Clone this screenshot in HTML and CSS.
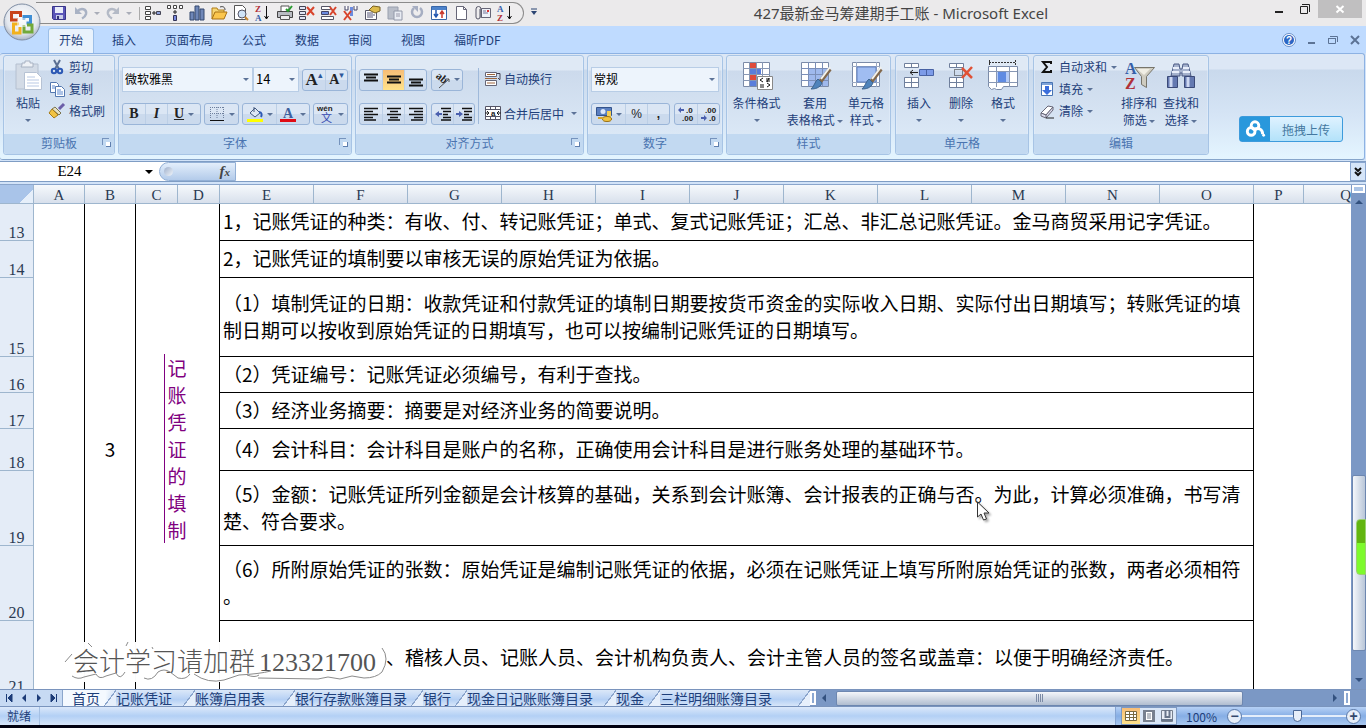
FILE: index.html
```html
<!DOCTYPE html>
<html lang="zh-CN">
<head>
<meta charset="utf-8">
<title>427最新金马筹建期手工账 - Microsoft Excel</title>
<link rel="stylesheet" href="styles.css">
</head>
<body>
<header class="titlebar">
  <button class="office" aria-label="Office">
    <svg width="38" height="38" viewBox="0 0 38 38"><defs><radialGradient id="orb" cx=".5" cy=".4" r=".6"><stop offset="0" stop-color="#fff"/><stop offset=".7" stop-color="#e4e8ef"/><stop offset="1" stop-color="#aab4c4"/></radialGradient></defs><circle cx="19" cy="19" r="18" fill="url(#orb)" stroke="#7f8da3"/><g fill="none" stroke-width="3"><path d="M15 17H8.500V9.500h9V14" stroke="#c8431b"/><path d="M21 17v-3.500h6.500V20H23" stroke="#3f8fd6"/><path d="M16 21H10.500v9h6.500v-6" stroke="#f2b11c"/><path d="M21 22v7h8v-7h-5" stroke="#72a93a"/></g><path d="M15 16h8v7h-8z" fill="none" stroke="#f7f7f7"/></svg>
  </button>
  <div class="qat">
    <button aria-label="保存"><svg viewBox="0 0 16 16"><path d="M1.500 1.500h13v13h-12l-1-1z" fill="#5a55b8" stroke="#38358a"/><path d="M4 2h8v6H4z" fill="#e8ecfa"/><path d="M5 10h7v4H5z" fill="#c8cce8"/><path d="M6 11h2v3H6z" fill="#333377"/></svg></button>
    <button aria-label="撤消"><svg viewBox="0 0 16 16"><path d="M4 7c4-5 10-3 9 2-.5 2-2 3.500-4 4.500" fill="none" stroke="#a9b2c4" stroke-width="2.500"/><path d="M2 2v7h7z" fill="#a9b2c4"/></svg></button><i class="arr dim"></i>
    <button aria-label="恢复"><svg viewBox="0 0 16 16"><path d="M12 7C8 2 2 4 3 9c.5 2 2 3.500 4 4.500" fill="none" stroke="#b4bac6" stroke-width="2.500"/><path d="M14 2v7H7z" fill="#b4bac6"/></svg></button><i class="arr dim"></i>
    <span class="bar"></span>
    <button aria-label="插入行"><svg viewBox="0 0 16 16"><path d="M.5 1.500h5v3h-5zM.5 6.500h5v3h-5zM.5 11.500h5v3h-5z" fill="#fff" stroke="#444"/><path d="M7 8h4M9 6v4" stroke="#222"/><path d="M11.500 6.500h4v3h-4z" fill="#8fa2da" stroke="#445"/></svg></button>
    <button aria-label="插入列"><svg viewBox="0 0 16 16"><path d="M.5.5h3v3h-3zM6.500.5h3v3h-3zM12.500.5h3v3h-3z" fill="#fff" stroke="#444"/><path d="M8 5v4M6 7h4" stroke="#222"/><path d="M6.500 10.500h3v5h-3z" fill="#7788dd" stroke="#335"/></svg></button>
    <button aria-label="图表"><svg viewBox="0 0 16 16"><path d="M1 7h4v8H1zM6 1h4v14H6zM11 4h4v11h-4z" fill="#6f87b8" stroke="#34486f"/></svg></button>
    <button aria-label="打开"><svg viewBox="0 0 16 16"><path d="M1 14V3h5l1 2h6v2" fill="#f7d774" stroke="#b07d18"/><path d="M1 14l3-7h12l-3 7z" fill="#fbc64d" stroke="#a87112"/><path d="M9 2c3-1 5 0 5 3" fill="none" stroke="#444"/></svg></button>
    <button aria-label="打印预览"><svg viewBox="0 0 16 16"><path d="M1.500.5h8l3 3v11h-11z" fill="#fff" stroke="#555"/><circle cx="9" cy="9" r="4" fill="#cfe3f7" stroke="#556"/><path d="M12 12l3 3" stroke="#c58430" stroke-width="2"/></svg></button>
    <button aria-label="降序"><svg viewBox="0 0 16 16"><text x="0" y="7" class="t9 red">Z</text><text x="0" y="16" class="t9 blue">A</text><path d="M11.500 1v13M9.500 11l2 3 2-3" stroke="#111" fill="none"/></svg></button>
    <button aria-label="打印"><svg viewBox="0 0 16 16"><path d="M4 6V1h8v5" fill="#fff" stroke="#555"/><path d="M.5 6.500h15v6H.5z" fill="#b9bcc2" stroke="#444"/><path d="M3.500 10.500h9v4h-9z" fill="#eee" stroke="#555"/><path d="M9 4l2 2 4-5" stroke="#2a9b30" fill="none" stroke-width="2"/></svg></button>
    <button aria-label="删除单元格"><svg viewBox="0 0 16 16"><path d="M.5 1.500h6v3h-6zM.5 6.500h6v3h-6zM.5 11.500h6v3h-6z" fill="#dfe6f5" stroke="#445"/><path d="M8 2l7 8M15 2l-7 8" stroke="#d8452d" stroke-width="2"/></svg></button>
    <button aria-label="删除行"><svg viewBox="0 0 16 16"><path d="M.5 1.500h9v3h-9zM.5 11.500h12v3h-12z" fill="#fff" stroke="#556"/><path d="M.5 6.500h7v3h-7z" fill="#6c8be0" stroke="#446"/><path d="M9 2l6 8M15 2l-6 8" stroke="#d8452d" stroke-width="2"/></svg></button>
    <button aria-label="删除列"><svg viewBox="0 0 16 16"><path d="M2 1v4h3V1M11 1v4h3V1" fill="#fff" stroke="#446"/><path d="M7 2h3v9H7z" fill="#6c8be0"/><path d="M1 6l7 9M8 6l-7 9" stroke="#d8452d" stroke-width="2"/></svg></button>
    <button aria-label="属性"><svg viewBox="0 0 16 16"><path d="M.5 5.500h11v9H.5z" fill="#fff" stroke="#556"/><path d="M2 8h6M2 10h8M2 12h6" stroke="#557"/><path d="M4 5l4-4 7 1v4l-5 2z" fill="#ddbb4c" stroke="#776022"/></svg></button>
    <button aria-label="粘贴"><svg viewBox="0 0 16 16"><path d="M1 2h10v12H1z" fill="#b9bec9" stroke="#999fae"/><path d="M7 6h8v9H7z" fill="#e9ecf3" stroke="#9298a8"/><path d="M9 9h4M9 11h4" stroke="#99a"/></svg></button>
    <button aria-label="重复"><svg viewBox="0 0 16 16"><path d="M11 3a5 5 0 1 1-6 0" fill="none" stroke="#a6aec2" stroke-width="2.500"/><path d="M3 1h6v6z" fill="#a6aec2"/></svg></button>
    <button aria-label="排序"><svg viewBox="0 0 16 16"><path d="M.5 1.500h15v13H.5z" fill="#fff" stroke="#3766a8"/><path d="M1 2h14v3H1z" fill="#4d83cb"/><path d="M5 5v7M3 9l2 3 2-3" stroke="#2458b0" fill="none" stroke-width="1.500"/><path d="M11 13V6M9 9l2-3 2 3" stroke="#c9392b" fill="none" stroke-width="1.500"/></svg></button>
    <button aria-label="新建"><svg viewBox="0 0 16 16"><path d="M3.500 1.500h7l3 3v10h-10z" fill="#fff" stroke="#667"/><path d="M10.500 1.500v3h3" fill="none" stroke="#667"/></svg></button>
    <button aria-label="邮件"><svg viewBox="0 0 16 16"><path d="M6.500 3.500h9v9h-9z" fill="#eef1f8" stroke="#667"/><path d="M8 6h3M8 8h5" stroke="#779"/><path d="M12 5h2v2h-2z" fill="#d33"/><path d="M5 4v8a2 2 0 0 1-4 0V4a2.500 2.500 0 0 1 5 0v9" fill="none" stroke="#556"/></svg></button>
    <button aria-label="升序"><svg viewBox="0 0 16 16"><text x="0" y="7" class="t9 blue">A</text><text x="0" y="16" class="t9 red">Z</text><path d="M12.500 1v13M10.500 11l2 3 2-3" stroke="#111" fill="none"/></svg></button>
  </div>
  <button class="more" aria-label="自定义"><svg width="8" height="8" viewBox="0 0 8 8"><path d="M1 1h6" stroke="#2b4472"/><path d="M1 3h6L4 7z" fill="#2b4472"/></svg></button>
  <h1>427最新金马筹建期手工账 - Microsoft Excel</h1>
  <div class="wincontrols">
    <button aria-label="最小化"><svg viewBox="0 0 12 12"><path d="M2 9h8" stroke="#222" stroke-width="2"/></svg></button>
    <button aria-label="还原"><svg viewBox="0 0 12 12"><path d="M1.500 3.500h7v7h-7zM3 1.500h7.500V9" fill="none" stroke="#222"/></svg></button>
    <button class="close" aria-label="关闭"><svg viewBox="0 0 12 12"><path d="M2.500 3l7 6.500M9.500 3l-7 6.500" stroke="#fff" stroke-width="2"/></svg></button>
  </div>
</header>

<nav class="tabs">
  <button class="on">开始</button><button>插入</button><button>页面布局</button><button>公式</button><button>数据</button><button>审阅</button><button>视图</button><button>福昕PDF</button>
  <div class="docs">
    <button aria-label="帮助"><svg viewBox="0 0 14 14"><circle cx="7" cy="7" r="6.500" fill="#fff" stroke="#6a8fc8"/><circle cx="7" cy="7" r="5" fill="#2c66c4"/><text x="4" y="11" class="q">?</text></svg></button>
    <button aria-label="最小化窗口"><svg viewBox="0 0 14 14"><path d="M4 10h7" stroke="#5c7395" stroke-width="2"/></svg></button>
    <button aria-label="还原窗口"><svg viewBox="0 0 14 14"><path d="M2.500 5.500h7v5h-7zM4 3.500h7.500V9M2 5.500h8" fill="none" stroke="#5c7395"/></svg></button>
    <button aria-label="关闭窗口"><svg viewBox="0 0 14 14"><path d="M3 3l8 8M11 3l-8 8" stroke="#5c7395" stroke-width="2"/></svg></button>
  </div>
</nav>

<section class="ribbon">
  <div class="group g-clip">
    <div class="content">
      <button class="big paste"><svg viewBox="0 0 32 32"><path d="M4 4h22v25H4z" fill="#d3dbe6" stroke="#b5c0d0"/><path d="M10 5V3h3V1h5v2h3v4H9z" fill="#eef1f6" stroke="#a8b2c2"/><path d="M12.500 12.500h12l5 5v12h-17z" fill="#fff" stroke="#b6c2d4"/><path d="M15 17h8M15 20h12M15 23h12M15 26h12" stroke="#b9c9e4"/></svg><span>粘贴</span><i class="arr"></i></button>
      <div class="stack">
        <button><svg viewBox="0 0 16 16"><path d="M5 1l5 9M11 1L6 10" stroke="#5b6f92" stroke-width="2"/><circle cx="5" cy="12" r="2.200" fill="none" stroke="#2c58b4" stroke-width="2"/><circle cx="11" cy="12" r="2.200" fill="none" stroke="#2c58b4" stroke-width="2"/></svg>剪切</button>
        <button><svg viewBox="0 0 16 16"><path d="M1.500 1.500h6l2 2v8h-8z" fill="#fff" stroke="#5478b0"/><path d="M6.500 5.500h6l3 3v7h-9z" fill="#fff" stroke="#5478b0"/><path d="M3 5h3M3 7h3M8 9h4M8 11h6M8 13h6" stroke="#5b87cf"/></svg>复制</button>
        <button><svg viewBox="0 0 16 16"><path d="M15 1l-5 5" stroke="#6b5ea8" stroke-width="3"/><path d="M6 4l6 6-2 2-7-6z" fill="#e6e0c0" stroke="#7b7450"/><path d="M3 6l6 6-4 3-5-5z" fill="#f1c343" stroke="#a67c18"/></svg>格式刷</button>
      </div>
    </div>
    <footer>剪贴板<i class="launch"></i></footer>
  </div>

  <div class="group g-font">
    <div class="content rows">
      <div class="row">
        <label class="combo w-font"><select aria-label="字体"><option>微软雅黑</option></select><i class="arr"></i></label>
        <label class="combo w-size"><select aria-label="字号"><option>14</option></select><i class="arr"></i></label>
        <div class="set push"><button class="w22 serif l">A<sup>▴</sup></button><button class="w22 serif">A<sup>▾</sup></button></div>
      </div>
      <div class="row">
        <div class="set"><button class="w22 serif">B</button><button class="w22 serif it">I</button><button class="w34 serif"><u>U</u><i class="arr"></i></button></div>
        <div class="set push"><button class="w34"><svg viewBox="0 0 16 16"><path d="M1.500 1v12M8 1v12M14.500 1v12M1 1.500h14M1 7.500h14" stroke="#6d7f9d" stroke-dasharray="1 1"/><path d="M1 14.500h14" stroke="#111"/></svg><i class="arr"></i></button></div>
        <div class="set"><button class="w34"><svg viewBox="0 0 16 16"><path d="M3 7l5-5 5 5-5 4z" fill="#dce6f4" stroke="#445a80"/><path d="M7 1v5" stroke="#445a80"/><path d="M12 6c3 0 3 3 2 5" fill="none" stroke="#2c58b4" stroke-width="2"/><path d="M0 13h16v3H0z" fill="#ff0"/></svg><i class="arr"></i></button><button class="w34"><svg viewBox="0 0 16 16"><text x="3" y="12" class="fa">A</text><path d="M0 13h16v3H0z" fill="#e00b14"/></svg><i class="arr"></i></button></div>
        <div class="set"><button class="w34"><svg viewBox="0 0 16 16"><text x="-1" y="5" class="wen">wén</text><text x="3" y="16" class="wz">文</text></svg><i class="arr"></i></button></div>
      </div>
    </div>
    <footer>字体<i class="launch"></i></footer>
  </div>

  <div class="group g-align">
    <div class="content">
      <div class="rows">
        <div class="row">
          <div class="set"><button class="w22"><svg viewBox="0 0 16 16"><path d="M1 2.500h14M3 5.500h10M1 8.500h14" stroke="#111" stroke-width="2"/></svg></button><button class="w22 hot"><svg viewBox="0 0 16 16"><path d="M1 4.500h14M3 7.500h10M1 10.500h14" stroke="#111" stroke-width="2"/></svg></button><button class="w22"><svg viewBox="0 0 16 16"><path d="M1 7.500h14M3 10.500h10M1 13.500h14" stroke="#111" stroke-width="2"/></svg></button></div>
          <div class="set"><button class="w30"><svg viewBox="0 0 16 16"><text x="1" y="10" class="ab" transform="rotate(40 8 8)">ab</text><path d="M5 16L15 7M12 7h3v3" fill="none" stroke="#555"/></svg><i class="arr"></i></button></div>
        </div>
        <div class="row">
          <div class="set"><button class="w22"><svg viewBox="0 0 16 16"><path d="M1 2.500h14M1 5.500h9M1 8.500h14M1 11.500h9M1 14h12" stroke="#111" stroke-width="1.500"/></svg></button><button class="w22"><svg viewBox="0 0 16 16"><path d="M1 2.500h14M4 5.500h8M1 8.500h14M4 11.500h8M2 14h12" stroke="#111" stroke-width="1.500"/></svg></button><button class="w22"><svg viewBox="0 0 16 16"><path d="M1 2.500h14M6 5.500h9M1 8.500h14M6 11.500h9M3 14h12" stroke="#111" stroke-width="1.500"/></svg></button></div>
          <div class="set"><button class="w21"><svg viewBox="0 0 16 16"><path d="M6 2.500h10M8 5.500h8M8 8.500h5M8 11.500h8M6 14h10" stroke="#111" stroke-width="1.500"/><path d="M0 8l4-3v2h3v2H4v2z" fill="#4a5fae"/></svg></button><button class="w21"><svg viewBox="0 0 16 16"><path d="M6 2.500h10M8 5.500h8M8 8.500h5M8 11.500h8M6 14h10" stroke="#111" stroke-width="1.500"/><path d="M7 8L3 5v2H0v2h3v2z" fill="#4a5fae"/></svg></button></div>
        </div>
      </div>
      <span class="vbar"></span>
      <div class="rows">
        <div class="row"><button class="flat"><svg viewBox="0 0 16 16"><path d="M.5 1.500h11v4H.5zM.5 9.500h11v5H.5z" fill="#fff" stroke="#667"/><path d="M2 3.500h8M2 12h8M0 7.500h12" stroke="#a0673d"/><path d="M12 2.500h3v6M13 7l2 2" fill="none" stroke="#445"/></svg>自动换行</button></div>
        <div class="row"><button class="flat"><svg viewBox="0 0 16 16"><path d="M.5 1.500h15v13H.5zM5.500 1v3M10.500 1v3M5.500 12v3M10.500 12v3M.5 4.500h15M.5 11.500h15" fill="#fff" stroke="#556"/><path d="M0 8h4M16 8h-4M2 6l2 2-2 2M14 6l-2 2 2 2" fill="none" stroke="#222"/><text x="6" y="11" class="a8">a</text></svg>合并后居中<i class="arr"></i></button></div>
      </div>
    </div>
    <footer>对齐方式<i class="launch"></i></footer>
  </div>

  <div class="group g-num">
    <div class="content rows">
      <div class="row"><label class="combo w-num"><select aria-label="数字格式"><option>常规</option></select><i class="arr"></i></label></div>
      <div class="row">
        <div class="set"><button class="w34"><svg viewBox="0 0 16 16"><path d="M.5 1.500h15v8H.5z" fill="#5b7fc0" stroke="#34548c"/><circle cx="7" cy="5.500" r="2.500" fill="#dce8fa"/><path d="M11 5h4v7h-4z" fill="#f4cd55"/><ellipse cx="11" cy="13" rx="4.500" ry="2.500" fill="#f1c340" stroke="#9a7114"/><path d="M2 12h5" stroke="#d5a52c" stroke-width="2"/></svg><i class="arr"></i></button><button class="w22 sans">%</button><button class="w22 sans comma">,</button></div>
        <div class="set"><button class="w22"><svg viewBox="0 0 16 16"><text x="8" y="7" class="dec">.0</text><text x="4" y="15" class="dec">.00</text><path d="M0 4l3-3v2h3v2H3v2z" fill="#4a5fae"/></svg></button><button class="w22"><svg viewBox="0 0 16 16"><text x="4" y="7" class="dec">.00</text><text x="8" y="15" class="dec">.0</text><path d="M6 12L3 9v2H0v2h3v2z" fill="#4a5fae"/></svg></button></div>
      </div>
    </div>
    <footer>数字<i class="launch"></i></footer>
  </div>

  <div class="group g-style">
    <div class="content">
      <button class="big w60"><svg viewBox="0 0 32 32"><path d="M2.500 2.500h26v24h-26z" fill="#fff" stroke="#7b8ba8"/><path d="M9 3h6v5H9zM9 15h6v5H9z" fill="#df4b3c"/><path d="M9 9h11v5H9zM9 21h6v5H9z" fill="#5b7edb"/><path d="M2 8.500h27M2 14.500h27M2 20.500h27M8.500 2v25M15.500 2v25M21.500 2v25" stroke="#8797b4"/><path d="M16.500 16.500h15v13h-15z" fill="#fff" stroke="#888"/><path d="M22 18l-3 2 3 2M19 25h4M19 27h4M25 19h4M25 21h4M28 18l-2 4M26 23l3 2-3 2" fill="none" stroke="#111"/></svg><span>条件格式</span><i class="arr"></i></button>
      <button class="big w58"><svg viewBox="0 0 32 32"><path d="M2.500 2.500h27v24h-27z" fill="#fff" stroke="#7b8ba8"/><path d="M9 9h20v17H9z" fill="#9fb9ed"/><path d="M2 8.500h28M2 14.500h28M2 20.500h28M9.500 2v25M16.500 2v25M23.500 2v25" stroke="#7b8fb8"/><path d="M31 9L21 22" stroke="#82684c" stroke-width="4"/><path d="M31 7l-9 12" stroke="#f2f2ee" stroke-width="2"/><path d="M19 19l4 4c-2 5-7 6-11 6 3-2 4-8 7-10z" fill="#4f83bb" stroke="#3e6590"/></svg><span>套用<br>表格格式 <i class="arr"></i></span></button>
      <button class="big w44"><svg viewBox="0 0 32 32"><path d="M2.500 2.500h27v24h-27z" fill="#fff" stroke="#7b8ba8"/><path d="M2 6.500h28M2 22.500h28M6.500 2v25M26.500 2v25" stroke="#9aa8c2"/><path d="M7 7h19v15H7z" fill="#a0bdf2" stroke="#6180bf"/><path d="M31 9L21 22" stroke="#82684c" stroke-width="4"/><path d="M31 7l-9 12" stroke="#f2f2ee" stroke-width="2"/><path d="M19 19l4 4c-2 5-7 6-11 6 3-2 4-8 7-10z" fill="#4f83bb" stroke="#3e6590"/></svg><span>单元格<br>样式 <i class="arr"></i></span></button>
    </div>
    <footer>样式</footer>
  </div>

  <div class="group g-cells">
    <div class="content">
      <button class="big w42"><svg viewBox="0 0 32 32"><path d="M1.500 3.500h14v4h-14zM1.500 17.500h14v10h-14zM8.500 3v5M8.500 17v10M1 22.500h15" fill="#fff" stroke="#6f7f9c"/><path d="M16.500 9.500h14v6h-14zM23.500 9v7" fill="#7c9be8" stroke="#4862a4"/><path d="M15 12.500H7M10 10l-3 2.500 3 2.500" fill="none" stroke="#222"/></svg><span>插入</span><i class="arr"></i></button>
      <button class="big w42"><svg viewBox="0 0 32 32"><path d="M4.500 3.500h14v4h-14zM4.500 17.500h14v10h-14zM11.500 3v5M11.500 17v10M4 22.500h15" fill="#fff" stroke="#6f7f9c"/><path d="M9.500 9.500h8v6h-8z" fill="none" stroke="#222" stroke-dasharray="1 1"/><path d="M17 8l10 10M27 7L17 18" stroke="#e05236" stroke-width="2.500"/></svg><span>删除</span><i class="arr"></i></button>
      <button class="big w42"><svg viewBox="0 0 32 32"><path d="M2 2.500h27M2.500 0v5M28.500 0v5" stroke="#333" stroke-dasharray="2 1"/><path d="M1.500 6.500h29v20h-14l-2 3h-5l-2-1-3 1-3-3z" fill="#fff" stroke="#7b8ba8"/><path d="M1 11.500h29M1 22.500h29M9.500 6v21M22.500 6v21" stroke="#8797b4"/><path d="M10 12h12v10H10z" fill="#b5cbf6"/><path d="M11 12h8v10h-8z" fill="#5f8be2"/></svg><span>格式</span><i class="arr"></i></button>
    </div>
    <footer>单元格</footer>
  </div>

  <div class="group g-edit">
    <div class="content">
      <div class="stack">
        <button><svg viewBox="0 0 16 16"><path d="M12 5V3H4l4 5-4 5h8v-2" fill="none" stroke="#111" stroke-width="2"/></svg>自动求和<i class="arr"></i></button>
        <button><svg viewBox="0 0 16 16"><path d="M2.500 1.500h11v13h-11z" fill="#fff" stroke="#4673b3"/><path d="M3 2h10v2H3z" fill="#7fa3d8"/><path d="M6 5h4v4h3l-5 5-5-5h3z" fill="#3a6ddb"/></svg>填充<i class="arr"></i></button>
        <button><svg viewBox="0 0 16 16"><path d="M2 10l7-7 5 1-7 8z" fill="#fff" stroke="#667"/><path d="M2 10l5 2v3l-5-2zM7 12l7-8v3l-7 8" fill="#dde" stroke="#667"/><path d="M7 15h8" stroke="#222"/></svg>清除<i class="arr"></i></button>
      </div>
      <button class="big w42"><svg viewBox="0 0 32 32"><path d="M11.500 7.500h20l-8 9v11l-5-3v-8z" fill="#cfccc0" stroke="#77756b"/><path d="M14 9h13l-6 6z" fill="#f0eee4"/><text x="2" y="14" class="az blue">A</text><text x="2" y="29" class="az red">Z</text></svg><span>排序和<br>筛选 <i class="arr"></i></span></button>
      <button class="big w42"><svg viewBox="0 0 32 32"><path d="M9 4h5l1 5h2l1-5h5l3 12h-9v-3h-2v3H6z" fill="#a5b2cd" stroke="#4c5b85"/><path d="M8 8h6M7 12h7M18 8h6M18 12h7" stroke="#e8eefa" stroke-width="2"/><path d="M2.500 16.500h10v11h-10zM19.500 16.500h10v11h-10z" fill="#6479b1" stroke="#3b4a78"/><path d="M6 17v10M23 17v10" stroke="#cdd8f2" stroke-width="3"/></svg><span>查找和<br>选择 <i class="arr"></i></span></button>
    </div>
    <footer>编辑</footer>
  </div>
  <button class="upload"><svg viewBox="0 0 30 25"><g fill="none" stroke="#fff" stroke-width="3"><circle cx="15" cy="9" r="4"/><circle cx="11" cy="15" r="4"/><path d="M14 13c4-2 9-1 9 5"/></g><circle cx="24" cy="19" r="1.500" fill="#fff"/></svg><span>拖拽上传</span></button>
</section>

<div class="formula">
  <input class="name" aria-label="名称框" value="E24"><i class="arr black"></i>
  <button class="fx"><i class="knob"></i><em>f<small>x</small></em></button>
  <input class="entry" aria-label="编辑栏">
  <button class="expand" aria-label="展开"><svg viewBox="0 0 12 12"><path d="M3 2l3 3 3-3M3 6l3 3 3-3" fill="none" stroke="#111" stroke-width="2"/></svg></button>
</div>

<main class="work">
  <div class="gridwrap">
    <table class="grid">
      <colgroup><col class="c-h"><col class="c-a"><col class="c-a"><col class="c-c"><col class="c-c"><col class="c-e"><col class="c-e"><col class="c-e"><col class="c-e"><col class="c-e"><col class="c-e"><col class="c-e"><col class="c-e"><col class="c-e"><col class="c-e"><col class="c-e"><col class="c-p"><col class="c-q"></colgroup>
      <thead><tr><th class="corner"></th><th>A</th><th>B</th><th>C</th><th>D</th><th>E</th><th>F</th><th>G</th><th>H</th><th>I</th><th>J</th><th>K</th><th>L</th><th>M</th><th>N</th><th>O</th><th>P</th><th class="last">Q</th></tr></thead>
      <tbody>
        <tr class="h37"><th>13</th><td class="rb" rowspan="9"></td><td class="rb mid" rowspan="9">3</td><td class="rb mid side" rowspan="9" colspan="2"><div class="vert">记账凭证的填制</div></td><td class="txt" colspan="11">1，记账凭证的种类：有收、付、转记账凭证；单式、复式记账凭证；汇总、非汇总记账凭证。金马商贸采用记字凭证。</td><td rowspan="9" colspan="2"></td></tr>
        <tr class="h37"><th>14</th><td class="txt" colspan="11">2，记账凭证的填制要以审核无误的原始凭证为依据。</td></tr>
        <tr class="h79"><th>15</th><td class="txt" colspan="11">（1）填制凭证的日期：收款凭证和付款凭证的填制日期要按货币资金的实际收入日期、实际付出日期填写；转账凭证的填<br>制日期可以按收到原始凭证的日期填写，也可以按编制记账凭证的日期填写。</td></tr>
        <tr class="h36"><th>16</th><td class="txt" colspan="11">（2）凭证编号：记账凭证必须编号，有利于查找。</td></tr>
        <tr class="h36"><th>17</th><td class="txt" colspan="11">（3）经济业务摘要：摘要是对经济业务的简要说明。</td></tr>
        <tr class="h42"><th>18</th><td class="txt" colspan="11">（4）会计科目：会计科目是账户的名称，正确使用会计科目是进行账务处理的基础环节。</td></tr>
        <tr class="h75"><th>19</th><td class="txt" colspan="11">（5）金额：记账凭证所列金额是会计核算的基础，关系到会计账簿、会计报表的正确与否。为此，计算必须准确，书写清<br>楚、符合要求。</td></tr>
        <tr class="h75"><th>20</th><td class="txt" colspan="11">（6）所附原始凭证的张数：原始凭证是编制记账凭证的依据，必须在记账凭证上填写所附原始凭证的张数，两者必须相符<br>。</td></tr>
        <tr class="h74"><th>21</th><td class="txt tail" colspan="11">、稽核人员、记账人员、会计机构负责人、会计主管人员的签名或盖章：以便于明确经济责任。</td></tr>
      </tbody>
    </table>
    <div class="banner"><span>会计学习请加群<b>123321700</b></span>
      <svg viewBox="0 0 330 44"><path d="M1 20l7-8M8 34q6 4 12 1l12-3q3 6 10 2l10-3q4 8 9-1M80 36q8 4 14-6 6-4 12 0l8 6q8 2 12-4M130 32q14 10 30 6l15-5q20-1 32-4M183 33q8 3 12 0M194 36l60 1 10-2 12 2 12-3 12 2q12 0 18-6 8-14 0-24M24 1l4 4M62 4l2-4M88 5l1 2" fill="none" stroke="#8b8b8b"/></svg>
    </div>
    <svg class="cursor" viewBox="0 0 14 20"><path d="M1.500 1v15l3.500-3 2.500 6 3-1-2.500-6h5z" fill="#fff" stroke="#333"/></svg>
  </div>
  <div class="vscroll"><span class="split"></span><i class="arr up"></i><span class="thumb"></span><i class="arr"></i></div>
  <span class="meter"></span>
</main>

<div class="sheets">
  <div class="nav">
    <button aria-label="第一张"><svg viewBox="0 0 8 8"><path d="M1.500 0v8M7 0L3 4l4 4z" fill="#1d3c78" stroke="#1d3c78"/></svg></button><button aria-label="上一张"><svg viewBox="0 0 8 8"><path d="M6 0L2 4l4 4z" fill="#1d3c78"/></svg></button><button aria-label="下一张"><svg viewBox="0 0 8 8"><path d="M2 0l4 4-4 4z" fill="#1d3c78"/></svg></button><button aria-label="最后一张"><svg viewBox="0 0 8 8"><path d="M6.500 0v8M1 0l4 4-4 4z" fill="#1d3c78" stroke="#1d3c78"/></svg></button>
  </div>
  <div class="list"><button class="first">首页</button><button>记账凭证</button><button>账簿启用表</button><button>银行存款账簿目录</button><button>银行</button><button>现金日记账账簿目录</button><button>现金</button><button>三栏明细账簿目录</button></div>
  <div class="hscroll"><span class="grip"></span><i class="arr left"></i><span class="hthumb"><i></i></span><i class="arr right"></i><span class="grip"></span></div>
</div>

<footer class="status">
  <span class="ready">就绪</span>
  <div class="zoombar">
    <div class="views"><button class="hot" aria-label="普通"><svg viewBox="0 0 14 12"><path d="M1.500 1.500h11v9h-11zM1 4.500h12M1 7.500h12M5.500 1v10M9.500 1v10" fill="#fff" stroke="#7a6a40"/></svg></button><button aria-label="页面布局"><svg viewBox="0 0 14 12"><path d="M1 0h12v12H1z" fill="#77808f"/><path d="M4 2h6v8H4z" fill="#fff"/><path d="M5 4h4M5 6h4M5 8h4" stroke="#77808f"/></svg></button><button aria-label="分页预览"><svg viewBox="0 0 14 12"><path d="M1.500.5h11v11h-11z" fill="#e8edf5" stroke="#77808f"/><path d="M5.500 0v7h4V0M1 10h12" fill="none" stroke="#68758a" stroke-width="2"/></svg></button></div>
    <span class="pct">100%</span>
    <button class="round" aria-label="缩小">−</button>
    <input type="range" min="0" max="100" value="54" aria-label="显示比例">
    <button class="round" aria-label="放大">+</button>
  </div>
</footer>
</body>
</html>
```

FILE: styles.css
```css
* { box-sizing: border-box; }
html, body { height: 100%; margin: 0; }
body {
  display: flex; flex-direction: column; overflow: hidden;
  font: 12px/17px "Noto Sans CJK SC", sans-serif; color: #1e3f7a;
  background: #d2e3f8; border-bottom: 3px solid #00000f;
}
button { font: inherit; color: inherit; border: 0; background: none; padding: 0; margin: 0; display: flex; align-items: center; justify-content: center; white-space: nowrap; }
svg { display: block; flex: none; overflow: visible; }
.arr { display: inline-block; flex: none; width: 0; height: 0; border: 3px solid transparent; border-top-color: #5c7398; border-bottom-width: 0; vertical-align: middle; }
.arr.dim { border-top-color: #a9adb8; }
.arr.black { border-width: 4px 4px 0; border-top-color: #000; }
.arr.up { border-width: 0 4px 4px; border-bottom-color: #33517f; }
.arr.left { border-width: 4px 4px 4px 0; border-color: transparent #33517f; }
.arr.right { border-width: 4px 0 4px 4px; border-color: transparent #33517f; }
.red { fill: #b03038; }
.blue { fill: #3560a8; }

/* title bar */
.titlebar { position: relative; z-index: 2; flex: none; display: flex; align-items: flex-start; height: 26px; background: #ebeaeb; }
.office { position: absolute; left: 3px; top: 3px; }
.qat { display: flex; align-items: center; gap: 6px; margin-top: 2px; height: 22px; margin-left: 36px; padding: 0 10px 0 15px; border: 1px solid #8b8b8b; border-left: 0; border-radius: 0 11px 11px 0; background: #eeedee; }
.qat svg { width: 16px; height: 16px; }
.qat .arr { margin: 0 -1px; }
.qat .bar { width: 1px; height: 13px; background: #aaa; margin: 0 -1px 0 2px; }
.t9 { font: bold 9px "Liberation Serif", serif; }
.more { width: 20px; height: 24px; }
h1 { flex: 1; margin: 0; padding-right: 8px; text-align: center; font: 15px/26px "Noto Sans", "Noto Sans CJK SC", sans-serif; color: #444; white-space: nowrap; }
.wincontrols { display: flex; margin-right: 4px; }
.wincontrols button { width: 26px; height: 18px; }
.wincontrols svg { width: 12px; height: 12px; }
.wincontrols .close { width: 44px; background: #c0bfc0; }

/* ribbon tabs */
.tabs { flex: none; display: flex; align-items: flex-end; gap: 7px; height: 27px; padding-left: 48px; background: #bfdbff; }
.tabs > button { height: 25px; padding: 0 11px 3px; border-radius: 3px 3px 0 0; }
.tabs > .on { background: #e9f2fc; border: 1px solid #9cbfe8; border-bottom: 0; padding: 0 10px 4px; }
.docs { display: flex; align-items: center; gap: 8px; margin-left: auto; padding-right: 4px; height: 27px; }
.docs svg { width: 14px; height: 14px; }
.q { font: bold 10px "Liberation Sans", sans-serif; fill: #fff; }

/* ribbon */
.ribbon { flex: none; display: flex; gap: 3px; height: 107px; padding: 1px 3px 4px; margin-right: 1px; border: 1px solid #8db2e3; border-left: 0; border-radius: 3px; background: linear-gradient(#dce7f5 0 15px, #c9d9ec 16px, #d5e4f5 60px, #e4f5ff 100%); border-bottom-color: #86a5cb; }
.group { flex: none; display: flex; flex-direction: column; border: 1px solid #a7c4e5; border-radius: 3px; box-shadow: inset 0 0 0 1px #e6f0fb80; background: linear-gradient(#dfe9f5 0 14px, #ccdaec 15px, #dbe8f6 80px); }
.content { flex: 1; display: flex; padding: 4px 3px 0; }
.group footer { position: relative; height: 20px; line-height: 18px; text-align: center; color: #4a74b0; background: #c2d9f1; border-radius: 0 0 3px 3px; }
.launch { position: absolute; right: 5px; top: 4px; width: 7px; height: 7px; border: solid #7593bd; border-width: 1px 0 0 1px; }
.launch::after { content: ""; position: absolute; left: 3px; top: 3px; width: 4px; height: 4px; border: solid #5f7fae; border-width: 0 1px 1px 0; background: #fff; }
.g-clip { width: 112px; }
.g-font { width: 234px; }
.g-align { width: 229px; }
.g-num { width: 136px; }
.g-style { width: 165px; margin-right: 1px; }
.g-cells { width: 134px; margin-right: 1px; }
.g-edit { width: 176px; }
.big { flex-direction: column; justify-content: flex-start; line-height: 17px; }
.big svg { width: 32px; height: 32px; margin-bottom: 2px; }
.big > .arr { margin-top: 8px; }
.w60 { width: 53px; }
.w58 { width: 64px; }
.w44 { width: 38px; }
.w42 { width: 42px; }
.paste { width: 42px; }
.g-cells .content { padding-left: 2px; }
.stack { display: flex; flex-direction: column; gap: 6px; }
.stack button { height: 16px; line-height: 14px; padding-bottom: 2px; gap: 4px; justify-content: flex-start; }
.stack svg { width: 16px; height: 16px; }
.g-edit .content { padding-left: 5px; }
.g-edit .stack { width: 79px; }
.rows { display: flex; flex-direction: column; gap: 11px; padding-top: 11px; }
.content > .rows { padding-top: 7px; }
.row { display: flex; align-items: center; gap: 3px; height: 25px; }
.row + .row { height: 22px; }
.g-align .row, .g-num .row { gap: 4px; }
.set { display: flex; height: 22px; border: 1px solid #9ab5d8; border-radius: 3px; background: linear-gradient(#dbe6f4 50%, #cbdaed 50%); }
.set button + button { border-left: 1px solid #bccfe6; }
.set svg { width: 16px; height: 16px; }
.set button { gap: 4px; color: #222; }
.w22 { width: 22px; }
.w21 { width: 21px; }
.w30 { width: 30px; }
.w34 { width: 33px; }
.serif { font: bold 14px "Liberation Serif", serif; }
.serif.l { font-size: 17px; }
.serif sup { font: 9px "DejaVu Sans", sans-serif; color: #2b579a; align-self: flex-start; margin-left: -4px; }
.it { font-style: italic; }
.sans { font: 12px "Liberation Sans", sans-serif; }
.comma { font-weight: bold; }
.hot { background: linear-gradient(#f7bd77, #ffe28a); }
.fa { font: bold 14px "Liberation Serif", serif; fill: #3e5f9d; }
.wen { font: bold 8px "Liberation Sans", sans-serif; fill: #222; }
.wz { font: 11px "Noto Sans CJK SC", sans-serif; fill: #3548b0; }
.ab { font: bold 11px "Liberation Serif", serif; fill: #222; }
.a8 { font: bold 8px "Liberation Sans", sans-serif; fill: #222; }
.dec { font: bold 8px "Liberation Sans", sans-serif; fill: #222; }
.az { font: bold 16px "Liberation Serif", serif; }
.combo { position: relative; height: 25px; }
.combo select { appearance: none; width: 100%; height: 25px; border: 1px solid #b8cde6; border-radius: 0; background: #edf4fc; padding: 0 2px 3px; font: 12px "Noto Sans CJK SC", sans-serif; color: #000; }
.combo .arr { position: absolute; right: 4px; top: 11px; }
.w-font { width: 131px; }
.w-size { width: 46px; margin-left: -3px; }
.w-size select { font-size: 13px; }
.w-num { width: 129px; }
.vbar { width: 1px; height: 56px; margin: 8px 6px 0 3px; background: #9fb9da; }
.flat { gap: 3px; padding-bottom: 2px; }
.flat svg { width: 16px; height: 16px; }
.flat .arr { margin-left: 4px; }
.upload { align-self: flex-end; width: 104px; height: 26px; margin: 0 0 13px 27px; border: 1px solid #3d9bdc; border-radius: 3px; background: linear-gradient(#dff2ff, #b3e2fa); color: #4478a0; }
.upload svg { width: 30px; height: 24px; background: #2998dc; }
.upload span { flex: 1; }

/* formula bar */
.formula { flex: none; display: flex; align-items: center; height: 21px; margin-top: 1px; background: #fff; border: solid #7f9dc4; border-width: 1px 0; }
.formula input { border: 0; background: #fff; height: 19px; padding: 0; outline: 0; }
.name { width: 139px; text-align: center; font: 15px "Liberation Serif", serif; color: #000; }
.formula .arr { margin: 0 6px; }
.fx { width: 77px; height: 19px; justify-content: space-between; border-radius: 10px 0 0 10px; border: 1px solid #93b0d6; background: linear-gradient(#e3eefb, #b3cbea); padding: 0 5px 0 4px; }
.fx em { font: italic bold 15px "Liberation Serif", serif; color: #444; }
.fx small { font-size: 11px; }
.knob { width: 9px; height: 9px; border-radius: 5px; background: linear-gradient(135deg, #9fb0cc, #f1f5fa); }
.entry { flex: 1; min-width: 0; }
.expand { width: 16px; height: 19px; border: 1px solid #88a5cf; background: #d5e5f8; }
.expand svg { width: 12px; height: 12px; }

/* worksheet */
.work { position: relative; flex: 1; min-height: 0; display: flex; margin-top: 2px; border-top: 1px solid #8ba6cc; background: #fff; }
.gridwrap { position: relative; flex: 1; min-width: 0; overflow: hidden; }
.grid { width: 100%; table-layout: fixed; border-collapse: separate; border-spacing: 0; }
.c-h { width: 34px; }
.c-a { width: 51px; }
.c-c { width: 42px; }
.c-e { width: 94px; }
.c-p { width: 50px; }
.grid th { padding: 0; font: 15px/15px "Liberation Serif", serif; color: #2b3a52; background: #e4ecf7; border: solid #9eb6ce; border-width: 0 1px 1px 0; overflow: hidden; }
.grid thead th { height: 19px; vertical-align: bottom; background: linear-gradient(#f6f9fc, #d8e0ec); }
.grid thead .corner { background: linear-gradient(135deg, transparent 74%, #e6effa 74%), #a9c4e9; }
.grid thead .last { text-align: right; border-right: 0; }
.grid tbody th { vertical-align: bottom; font-size: 16px; }
.grid td { padding: 0; color: #000; }
.grid .rb { border-right: 1px solid #000; }
.grid .mid { text-align: center; vertical-align: middle; font-size: 19px; padding-bottom: 3px; }
.grid .txt { padding: 0 0 3px 3px; vertical-align: middle; font-size: 19px; line-height: 27px; white-space: nowrap; border: solid #000; border-width: 0 1px 1px 0; }
.grid .tail { text-indent: 163px; }
.grid .side { padding-right: 4px; }
.vert { width: 24px; margin: 0 auto; padding-left: 3px; border-left: 1px solid #800080; color: #800080; line-height: 27px; white-space: normal; word-break: break-all; text-align: left; }
.h36 { height: 36px; }
.h37 { height: 37px; }
.h42 { height: 42px; }
.h74 { height: 74px; }
.h75 { height: 75px; }
.h79 { height: 79px; }
.banner { position: absolute; left: 64px; top: 457px; width: 322px; height: 40px; background: #fffffffa; border-radius: 8px; }
.banner span { display: block; padding-left: 9px; font-size: 26px; line-height: 36px; font-weight: 300; color: #555; white-space: nowrap; }
.banner b { margin-left: 4px; font: 26px "Liberation Serif", serif; }
.banner svg { position: absolute; left: 0; top: 0; width: 330px; height: 44px; }
.cursor { position: absolute; left: 976px; top: 316px; width: 14px; height: 20px; filter: drop-shadow(2px 2px 1px #0005); }
.vscroll { flex: none; width: 15px; display: flex; flex-direction: column; align-items: center; background: #7b98c5; }
.vscroll .split { width: 13px; height: 8px; border: 2px solid #fff; background: #aac4e6; }
.vscroll .up { margin-top: 7px; }
.vscroll .thumb { width: 14px; height: 176px; margin-top: auto; margin-bottom: 27px; border: 1px solid #6d87b0; border-radius: 2px; background: linear-gradient(90deg, #f4f7fb, #b9c6d8); }
.vscroll > .arr:last-child { border-width: 4px 4px 0; border-top-color: #33517f; margin-bottom: 7px; }
.meter { position: absolute; right: 0; bottom: 114px; width: 10px; height: 56px; border: 1px solid #9bd070; border-radius: 4px 0 0 4px; background: linear-gradient(#62b510 42%, #7dfa2c 42%); }

/* sheet tabs */
.sheets { flex: none; display: flex; height: 18px; background: linear-gradient(#dbe8f8, #b5d0f4 60%, #d7e6f9); border: solid #7a94bd; border-width: 1px 0; }
.nav { flex: none; display: flex; gap: 7px; padding: 0 5px; width: 63px; border-right: 1px solid #8ba6cc; background: #c7daf3; }
.nav svg { width: 8px; height: 8px; }
.list { flex: 1 1 748px; min-width: 0; display: flex; font-size: 14px; line-height: 16px; }
.list button { height: 16px; }
.list button::after { content: ""; width: 12px; height: 16px; margin-left: 4px; background: linear-gradient(127deg, transparent 48%, #8ba5cc 48% 54%, #e6effb 54%); }
.list .first { padding-left: 9px; background: linear-gradient(90deg, #f4f9ff 80%, transparent); }
.list button:nth-child(2)::after, .list button:nth-child(6)::after { margin-left: 11px; }
.list button:nth-child(3)::after { margin-left: 18px; }
.list button:nth-child(8)::after { margin-left: 26px; }
.hscroll { flex: 0 1 556px; display: flex; align-items: center; background: #7b98c5; }
.grip { flex: none; width: 6px; height: 14px; margin-right: 6px; border: 2px solid #fff; background: #8ca8d2; }
.hthumb { flex: 1; height: 15px; margin: 0 90px 0 10px; display: flex; justify-content: center; align-items: center; border: 1px solid #6d87b0; border-radius: 2px; background: linear-gradient(#f4f6fa, #b0bdd0); }
.hthumb i { width: 7px; height: 8px; background: repeating-linear-gradient(90deg, #7b8aa5 0 1px, transparent 1px 2px); }
.hscroll .right { margin-right: 7px; }
.hscroll .grip:last-child { margin-right: 16px; }

/* status bar */
.status { flex: none; display: flex; justify-content: space-between; height: 18px; background: linear-gradient(#dbe8fa, #b3d0f5 50%, #d6e5f9); }
.ready { padding: 0 8px 0 7px; border-right: 1px solid #a5c0e3; }
.zoombar { display: flex; align-items: center; width: 251px; padding-left: 5px; border-left: 1px solid #86a5d3; background: linear-gradient(#b6d1f6, #86aee5 50%, #a9c8f1); }
.views { display: flex; border: 1px solid #7d99c3; background: #d9e6f7; }
.views button { width: 18px; height: 16px; }
.views svg { width: 14px; height: 12px; }
.pct { width: 50px; padding-left: 9px; }
.round { width: 15px; height: 15px; border: 1px solid #5978a8; border-radius: 8px; background: #e6eef9; font: bold 14px/12px "Liberation Sans", sans-serif; color: #33486c; }
.zoombar input { appearance: none; flex: 1; min-width: 0; margin: 0; height: 12px; background: linear-gradient(transparent 5px, #e4eefb 5px 7px, transparent 7px); }
.zoombar input::-webkit-slider-thumb { appearance: none; width: 9px; height: 12px; border: 1px solid #4a6796; border-radius: 0 0 5px 5px; background: #e6eef9; }
.zoombar .round:last-child { margin-right: 5px; }
```
